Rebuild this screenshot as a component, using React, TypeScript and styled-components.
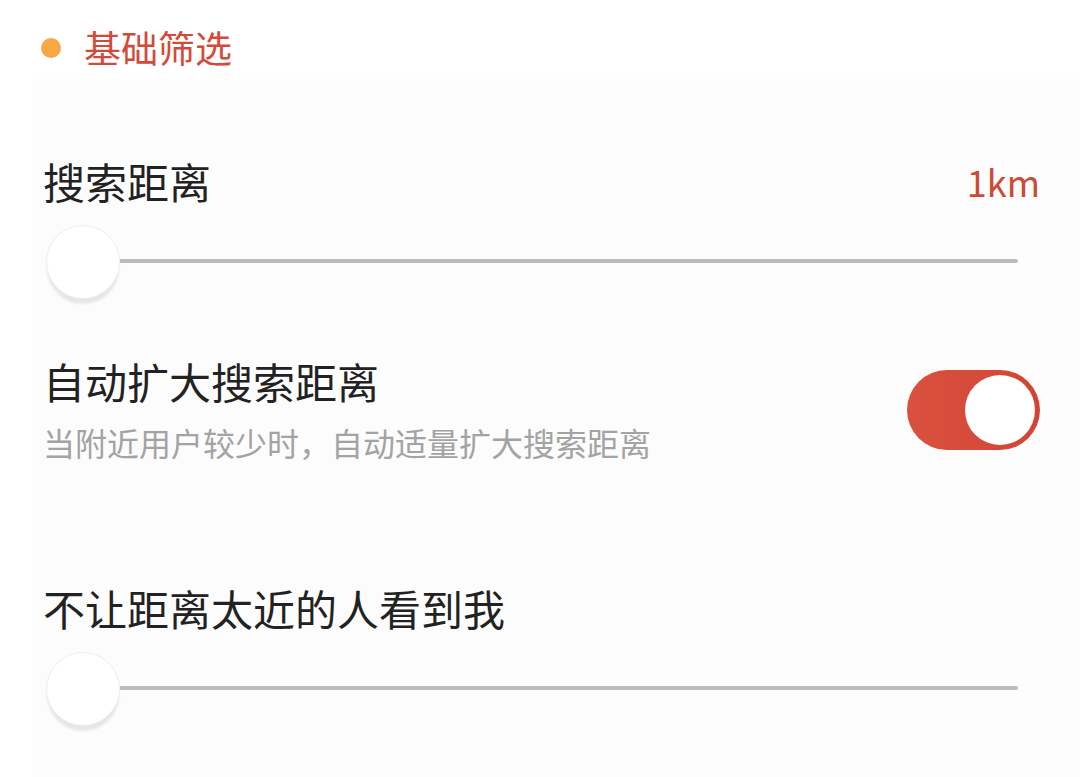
import React from "react";
import styled, { createGlobalStyle } from "styled-components";

const Global = createGlobalStyle`
  html, body { margin: 0; padding: 0; background: #ffffff; }
  body { font-family: "Noto Sans CJK SC", "Noto Sans", sans-serif; }
  * { box-sizing: border-box; }
`;

const Page = styled.div`
  width: 1080px;
  height: 777px;
  display: flex;
  flex-direction: column;
  background: #ffffff;
  overflow: hidden;
`;

const Header = styled.div`
  display: flex;
  align-items: center;
  gap: 23px;
  padding: 28px 0 13px 41px;
`;

const Dot = styled.span`
  width: 20px;
  height: 20px;
  border-radius: 50%;
  background: #f7a844;
  flex: none;
  margin-top: 2px;
`;

const SectionTitle = styled.h2`
  margin: 0;
  font-size: 37px;
  line-height: 38px;
  font-weight: 400;
  color: #d24b38;
`;

const Card = styled.div`
  flex: 1;
  margin-left: 32px;
  background: #fcfcfc;
  padding: 81px 40px 0 11px;
  display: flex;
  flex-direction: column;
`;

const Item = styled.div<{ $gap?: number }>`
  display: flex;
  flex-direction: column;
  margin-bottom: ${(p) => p.$gap ?? 0}px;
`;

const LabelRow = styled.div`
  display: flex;
  align-items: center;
  justify-content: space-between;
`;

const Label = styled.div`
  font-size: 42px;
  line-height: 42px;
  color: #222222;
`;

const Value = styled.div`
  font-size: 36px;
  line-height: 42px;
  color: #cd4a37;
`;

const Slider = styled.div`
  display: flex;
  align-items: center;
  height: 74px;
  margin: 23px 22px 0 3px;
`;

const Thumb = styled.div`
  width: 74px;
  height: 74px;
  border-radius: 50%;
  background: #ffffff;
  border: 1px solid #eeeeee;
  box-shadow: 0 6px 3px -1px rgba(0, 0, 0, 0.09);
  flex: none;
`;

const Track = styled.div`
  flex: 1;
  height: 4px;
  margin-top: -3px;
  background: #bcbcbc;
  border-radius: 0 2px 2px 0;
`;

const SwitchRow = styled.div`
  display: flex;
  justify-content: space-between;
  align-items: flex-start;
`;

const TextCol = styled.div`
  display: flex;
  flex-direction: column;
  gap: 24px;
`;

const Hint = styled.div`
  font-size: 32px;
  line-height: 32px;
  color: #a3a3a3;
`;

const Toggle = styled.div`
  width: 133px;
  height: 80px;
  margin-top: 10px;
  border-radius: 40px;
  background: linear-gradient(90deg, #d9513e 0%, #d24534 100%);
  display: flex;
  align-items: center;
  justify-content: flex-end;
  padding-right: 5px;
  flex: none;
`;

const ToggleKnob = styled.div`
  width: 70px;
  height: 70px;
  border-radius: 50%;
  background: #ffffff;
`;

export default function App() {
  return (
    <>
      <Global />
      <Page>
        <Header>
          <Dot />
          <SectionTitle>基础筛选</SectionTitle>
        </Header>
        <Card>
          <Item $gap={61}>
            <LabelRow>
              <Label>搜索距离</Label>
              <Value>1km</Value>
            </LabelRow>
            <Slider>
              <Thumb />
              <Track />
            </Slider>
          </Item>
          <Item $gap={129}>
            <SwitchRow>
              <TextCol>
                <Label>自动扩大搜索距离</Label>
                <Hint>当附近用户较少时，自动适量扩大搜索距离</Hint>
              </TextCol>
              <Toggle>
                <ToggleKnob />
              </Toggle>
            </SwitchRow>
          </Item>
          <Item>
            <LabelRow>
              <Label>不让距离太近的人看到我</Label>
            </LabelRow>
            <Slider>
              <Thumb />
              <Track />
            </Slider>
          </Item>
        </Card>
      </Page>
    </>
  );
}
